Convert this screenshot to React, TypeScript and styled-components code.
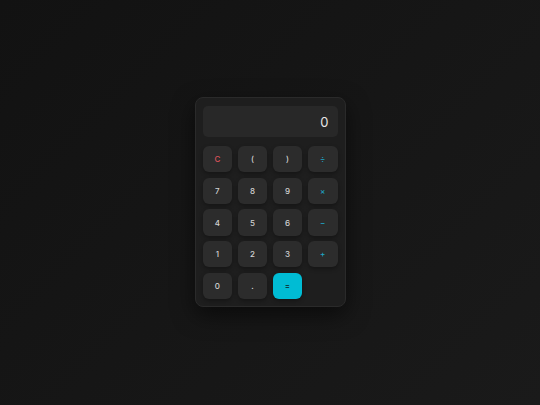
import React from "react";
import styled, { createGlobalStyle } from "styled-components";

const Global = createGlobalStyle`
  html, body { margin: 0; padding: 0; }
  body {
    width: 540px;
    height: 405px;
    overflow: hidden;
    background: linear-gradient(135deg, #121212 0%, #161616 50%, #1a1a1a 100%);
    font-family: Inter, "Noto Sans", "Liberation Sans", sans-serif;
  }
`;

const Page = styled.div`
  width: 540px;
  height: 405px;
  display: flex;
  align-items: flex-start;
  justify-content: center;
  padding-top: 97px;
  box-sizing: border-box;
`;

const Card = styled.div`
  width: 151px;
  box-sizing: border-box;
  padding: 8px 7px 7px 7px;
  background: #1e1e1e;
  border: 1px solid #2a2a2a;
  border-radius: 8px;
  box-shadow: 0 8px 22px rgba(0, 0, 0, 0.55);
  display: flex;
  flex-direction: column;
  gap: 9px;
`;

const Display = styled.div`
  height: 31px;
  background: #282828;
  border-radius: 5px;
  display: flex;
  align-items: center;
  justify-content: flex-end;
  padding-right: 9px;
  color: #e6e6e6;
  font-size: 13px;
  font-weight: 400;
`;

const Keys = styled.div`
  display: grid;
  grid-template-columns: repeat(4, 1fr);
  grid-auto-rows: 26.4px;
  gap: 5.3px;
`;

type Kind = "num" | "op" | "clear" | "eq";

const colors: Record<Kind, string> = {
  num: "#d2d2d2",
  op: "#1fa6c4",
  clear: "#d9525a",
  eq: "#101a1c",
};

const Key = styled.button<{ $kind: Kind }>`
  border: none;
  margin: 0;
  padding: 0;
  border-radius: 6px;
  background: ${(p) => (p.$kind === "eq" ? "#00bcd4" : "#2c2c2c")};
  color: ${(p) => colors[p.$kind]};
  font-family: Inter, "Noto Sans", "Liberation Sans", sans-serif;
  font-size: 8px;
  font-weight: 500;
  display: flex;
  align-items: center;
  justify-content: center;
  box-shadow: 0 2px 4px rgba(0, 0, 0, 0.3);
`;

const keys: [string, Kind][] = [
  ["C", "clear"], ["(", "num"], [")", "num"], ["÷", "op"],
  ["7", "num"], ["8", "num"], ["9", "num"], ["×", "op"],
  ["4", "num"], ["5", "num"], ["6", "num"], ["−", "op"],
  ["1", "num"], ["2", "num"], ["3", "num"], ["+", "op"],
  ["0", "num"], [".", "num"], ["=", "eq"],
];

export default function App() {
  return (
    <>
      <Global />
      <Page>
        <Card>
          <Display>0</Display>
          <Keys>
            {keys.map(([label, kind]) => (
              <Key key={label} $kind={kind}>
                {label}
              </Key>
            ))}
          </Keys>
        </Card>
      </Page>
    </>
  );
}
